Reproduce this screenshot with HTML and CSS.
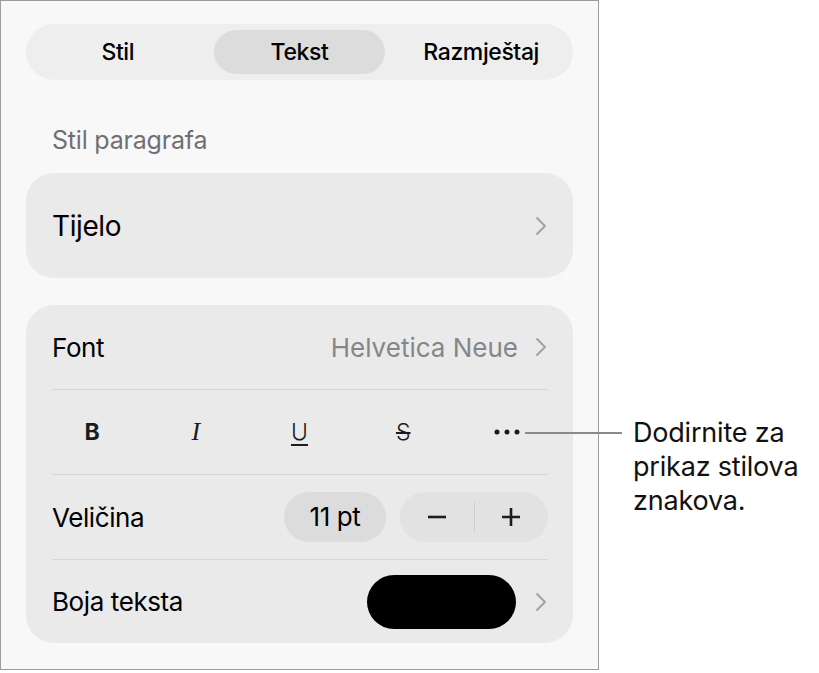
FILE: index.html
```html
<html>
  <head>
    <link rel="stylesheet" href="styles.css">
  </head>
  <body>

    <div class="panel">
      <div class="segments">
        <div class="segment">Stil</div>
        <div class="segment selected">Tekst</div>
        <div class="segment">Razmještaj</div>
      </div>

      <div class="section-title">Stil paragrafa</div>

      <div class="card style-card">
        <div class="style-name">Tijelo</div>
        <svg class="chevron" width="14" height="22" viewBox="0 0 14 22"><path d="M3 3 L11 11 L3 19" /></svg>
      </div>

      <div class="card">
        <div class="row">
          <div class="row-label">Font</div>
          <div class="row-value">Helvetica Neue</div>
          <svg class="chevron" width="14" height="22" viewBox="0 0 14 22"><path d="M3 3 L11 11 L3 19" /></svg>
        </div>

        <div class="row format-row">
          <div class="format bold">B</div>
          <div class="format italic">I</div>
          <div class="format underline">U</div>
          <div class="format strike">S</div>
          <div class="format more">
            <svg width="26" height="6" viewBox="0 0 26 6">
              <circle cx="3" cy="3" r="2.5" />
              <circle cx="13" cy="3" r="2.5" />
              <circle cx="23" cy="3" r="2.5" />
            </svg>
          </div>
        </div>

        <div class="row">
          <div class="row-label">Veličina</div>
          <div class="size-value">11 pt</div>
          <div class="stepper">
            <div class="step">
              <svg width="22" height="22" viewBox="0 0 22 22"><path d="M2 11 H20" /></svg>
            </div>
            <div class="step">
              <svg width="22" height="22" viewBox="0 0 22 22"><path d="M2 11 H20 M11 2 V20" /></svg>
            </div>
          </div>
        </div>

        <div class="row">
          <div class="row-label">Boja teksta</div>
          <div class="swatch"></div>
          <svg class="chevron" width="14" height="22" viewBox="0 0 14 22"><path d="M3 3 L11 11 L3 19" /></svg>
        </div>
      </div>
    </div>

    <div class="callout">
      <div class="callout-line"></div>
      <div class="callout-text">Dodirnite za<br>prikaz stilova<br>znakova.</div>
    </div>

  </body>
</html>
```

FILE: styles.css
```css
body {
  font-family: Inter, "Noto Sans", sans-serif;
  -webkit-font-smoothing: antialiased;
  margin: 0;
  background: #FFFFFF;
  color: #000000;
}

.panel {
  width: 599px;
  height: 670px;
  box-sizing: border-box;
  border: 1px solid #9C9C9C;
  background: #F8F8F8;
  padding: 23px 25px 0 25px;
}

.segments {
  display: grid;
  grid-template-columns: 1fr 1fr 1fr;
  gap: 10px;
  height: 56px;
  padding: 6px;
  box-sizing: border-box;
  border-radius: 28px;
  background: #EEEEEF;
}

.segment {
  display: flex;
  align-items: center;
  justify-content: center;
  border-radius: 22px;
  font-size: 23px;
  font-weight: 500;
  letter-spacing: -0.4px;
}

.segment.selected {
  background: #DCDCDD;
}

.section-title {
  height: 93px;
  padding-left: 26px;
  line-height: 120px;
  font-size: 25px;
  color: #707072;
  letter-spacing: -0.2px;
  box-sizing: border-box;
}

.card {
  border-radius: 28px;
  background: #EAEAEA;
  padding: 0 25px 0 26px;
}

.style-card {
  display: flex;
  align-items: center;
  height: 105px;
  margin-bottom: 27px;
}

.style-name {
  flex: 1;
  font-size: 28px;
  letter-spacing: -0.4px;
}

.chevron {
  fill: none;
  stroke: #A0A0A2;
  stroke-width: 1.8;
  stroke-linecap: round;
  stroke-linejoin: round;
}

.row {
  display: flex;
  align-items: center;
  height: 84px;
}

.row + .row {
  border-top: 1px solid #D6D6D6;
}

.row:last-child {
  height: 83px;
}

.row-label {
  flex: 1;
  font-size: 26px;
  letter-spacing: -0.4px;
}

.row-value {
  font-size: 26px;
  color: #86868A;
  margin-right: 16px;
  letter-spacing: 0;
}

.format-row {
  justify-content: space-between;
  padding: 0 21px 0 20px;
}

.format {
  width: 40px;
  text-align: center;
  font-size: 23px;
  color: #1C1C1E;
}

.bold {
  font-weight: 700;
}

.italic {
  font-family: "Liberation Serif", serif;
  font-style: italic;
  font-size: 26px;
}

.underline {
  text-decoration: underline;
  text-underline-offset: 4px;
  text-decoration-thickness: 2px;
  font-weight: 300;
}

.strike {
  text-decoration: line-through;
  text-decoration-thickness: 1.5px;
  font-weight: 300;
}

.more svg {
  fill: #1C1C1E;
  display: block;
  margin: 0 auto;
}

.size-value {
  width: 102px;
  height: 50px;
  line-height: 50px;
  border-radius: 25px;
  background: #DCDCDD;
  text-align: center;
  font-size: 26px;
  letter-spacing: -0.4px;
  margin-right: 14px;
}

.stepper {
  display: flex;
  width: 148px;
  height: 50px;
  border-radius: 25px;
  background: #E2E2E3;
}

.step {
  flex: 1;
  display: flex;
  align-items: center;
  justify-content: center;
}

.step + .step {
  border-left: 1px solid #CDCDCE;
  margin: 10px 0;
}

.step svg {
  stroke: #1C1C1E;
  stroke-width: 2.6;
  fill: none;
}

.swatch {
  width: 149px;
  height: 54px;
  border-radius: 27px;
  background: #000000;
  margin-right: 18px;
}

.callout {
  position: absolute;
  left: 525px;
  top: 416px;
  display: flex;
  align-items: flex-start;
}

.callout-line {
  width: 97px;
  height: 2px;
  margin-top: 16px;
  margin-right: 11px;
  background: #8A8A8A;
}

.callout-text {
  font-size: 27px;
  line-height: 34px;
  letter-spacing: -0.2px;
  color: #111111;
}
```
